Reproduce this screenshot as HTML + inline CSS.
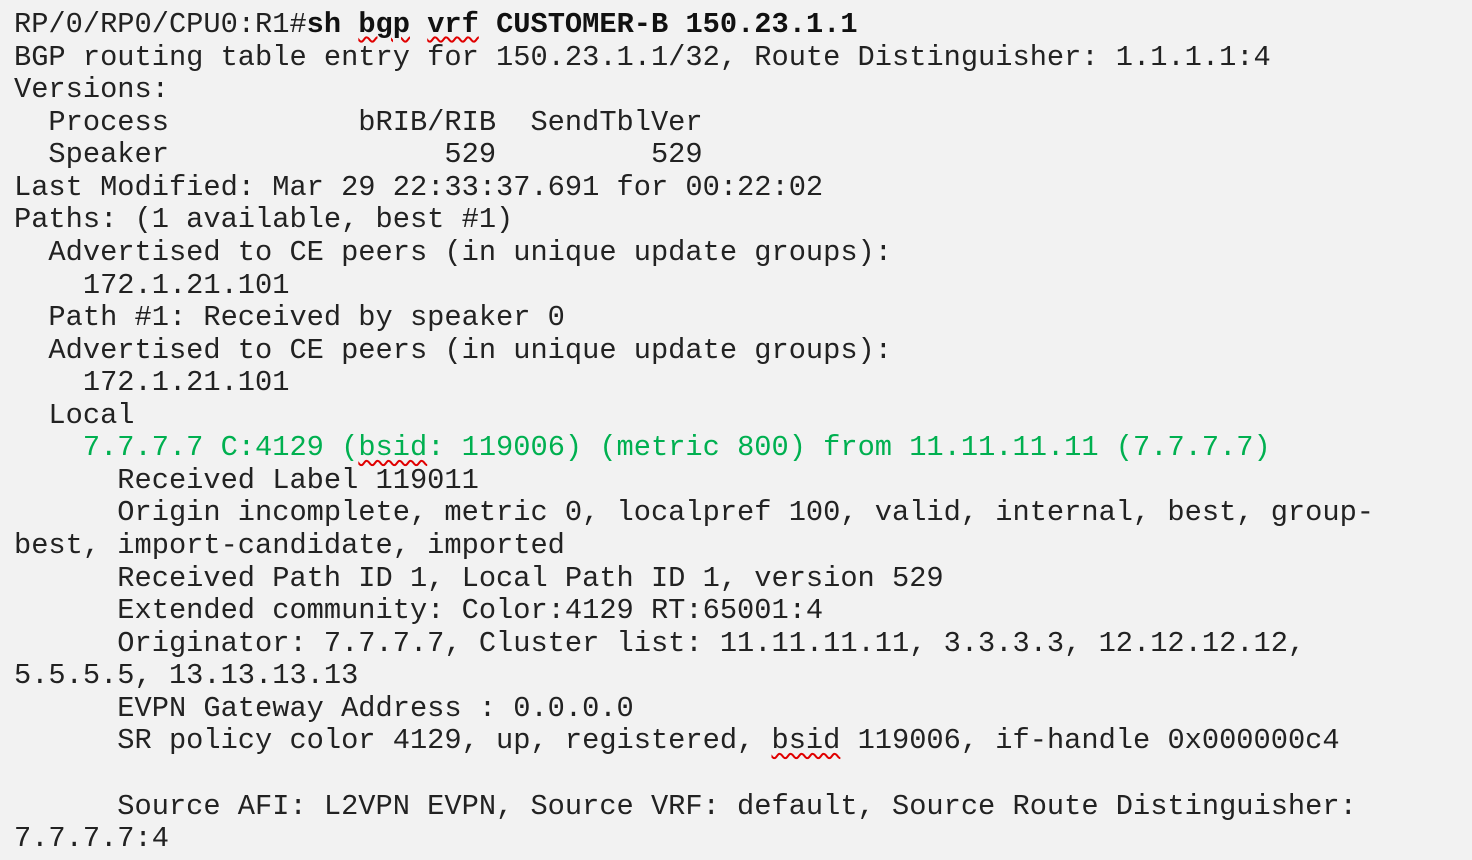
<!DOCTYPE html>
<html><head><meta charset="utf-8"><style>
html,body{margin:0;padding:0;background:#f2f2f2;width:1472px;height:860px;overflow:hidden}
pre{margin:0;padding:9px 0 0 14px;font-family:"Liberation Mono","Courier New",monospace;font-size:28.7px;line-height:32.56px;color:#222;white-space:pre}
b{font-weight:bold;color:#111}
.g{color:#00b050}
.w{text-decoration:underline wavy #e00000;text-decoration-thickness:1.5px;text-underline-offset:4px}
</style></head><body><pre>RP/0/RP0/CPU0:R1#<b>sh <span class="w">bgp</span> <span class="w">vrf</span> CUSTOMER-B 150.23.1.1</b>
BGP routing table entry for 150.23.1.1/32, Route Distinguisher: 1.1.1.1:4
Versions:
  Process           bRIB/RIB  SendTblVer
  Speaker                529         529
Last Modified: Mar 29 22:33:37.691 for 00:22:02
Paths: (1 available, best #1)
  Advertised to CE peers (in unique update groups):
    172.1.21.101
  Path #1: Received by speaker 0
  Advertised to CE peers (in unique update groups):
    172.1.21.101
  Local
<span class="g">    7.7.7.7 C:4129 (<span class="w">bsid</span>: 119006) (metric 800) from 11.11.11.11 (7.7.7.7)</span>
      Received Label 119011
      Origin incomplete, metric 0, localpref 100, valid, internal, best, group-
best, import-candidate, imported
      Received Path ID 1, Local Path ID 1, version 529
      Extended community: Color:4129 RT:65001:4
      Originator: 7.7.7.7, Cluster list: 11.11.11.11, 3.3.3.3, 12.12.12.12,
5.5.5.5, 13.13.13.13
      EVPN Gateway Address : 0.0.0.0
      SR policy color 4129, up, registered, <span class="w">bsid</span> 119006, if-handle 0x000000c4

      Source AFI: L2VPN EVPN, Source VRF: default, Source Route Distinguisher:
7.7.7.7:4</pre></body></html>
